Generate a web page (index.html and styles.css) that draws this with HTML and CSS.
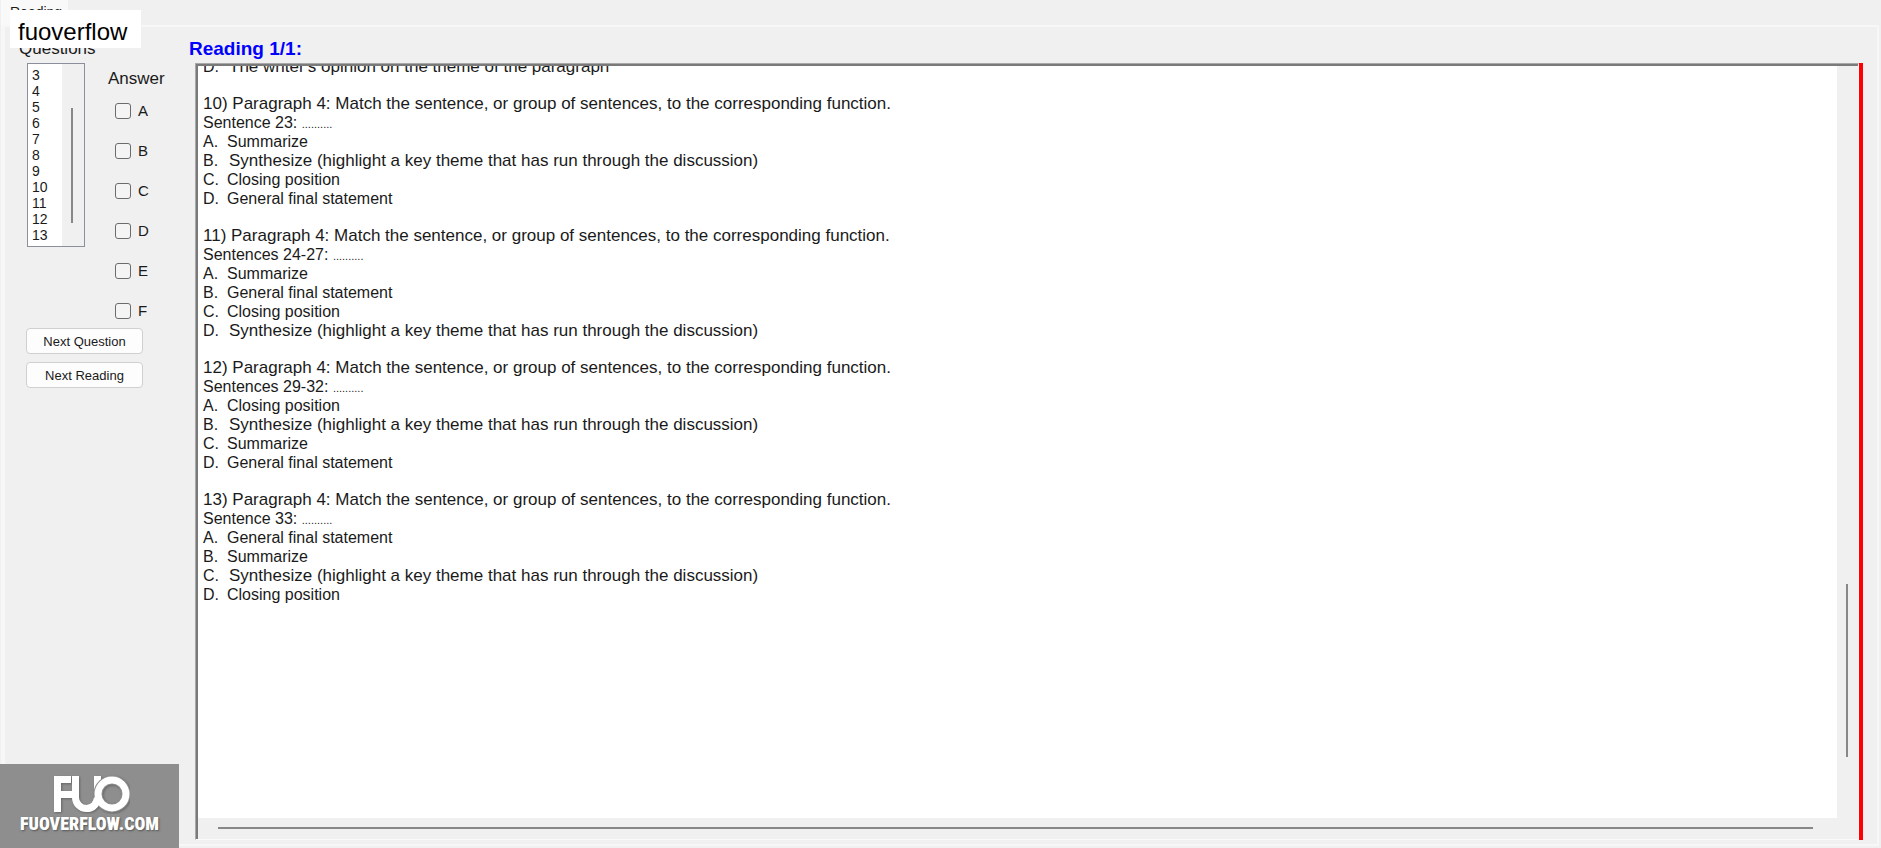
FILE: index.html
```
<!DOCTYPE html>
<html lang="en">
<head>
    <meta charset="UTF-8">
    <meta name="viewport" content="width=device-width, initial-scale=1.0">
    <title>Reading</title>
    <link rel="stylesheet" href="styles.css">
</head>
<body>
    <div class="tabs">
        <div class="tab">Reading</div>
    </div>

    <main class="panel">
        <aside class="sidebar">
            <label class="title" for="questions">Questions</label>
            <div class="columns">
                <div class="list">
                    <select id="questions" size="11">
                        <option>3</option>
                        <option>4</option>
                        <option>5</option>
                        <option>6</option>
                        <option>7</option>
                        <option>8</option>
                        <option>9</option>
                        <option>10</option>
                        <option>11</option>
                        <option>12</option>
                        <option>13</option>
                    </select>
                    <div class="list-track"><div class="list-thumb"></div></div>
                </div>
                <div class="answers">
                    <div class="title">Answer</div>
                    <label><input type="checkbox">A</label>
                    <label><input type="checkbox">B</label>
                    <label><input type="checkbox">C</label>
                    <label><input type="checkbox">D</label>
                    <label><input type="checkbox">E</label>
                    <label><input type="checkbox">F</label>
                </div>
            </div>
            <div class="buttons">
                <button type="button">Next Question</button>
                <button type="button">Next Reading</button>
            </div>
        </aside>

        <section class="reading">
            <h1>Reading 1/1:</h1>
            <div class="frame">
                <div class="viewer">
                    <div class="text">
                        <div class="question">
                            <p class="wide"><span class="letter">D.</span>The writer's opinion on the theme of the paragraph</p>
                        </div>
                        <div class="question">
                            <p class="wide">10) Paragraph 4: Match the sentence, or group of sentences, to the corresponding function.</p>
                            <p>Sentence 23: <span class="dots">..........</span></p>
                            <p><span class="letter">A.</span>Summarize</p>
                            <p class="wide"><span class="letter">B.</span>Synthesize (highlight a key theme that has run through the discussion)</p>
                            <p><span class="letter">C.</span>Closing position</p>
                            <p><span class="letter">D.</span>General final statement</p>
                        </div>
                        <div class="question">
                            <p class="wide">11) Paragraph 4: Match the sentence, or group of sentences, to the corresponding function.</p>
                            <p>Sentences 24-27: <span class="dots">..........</span></p>
                            <p><span class="letter">A.</span>Summarize</p>
                            <p><span class="letter">B.</span>General final statement</p>
                            <p><span class="letter">C.</span>Closing position</p>
                            <p class="wide"><span class="letter">D.</span>Synthesize (highlight a key theme that has run through the discussion)</p>
                        </div>
                        <div class="question">
                            <p class="wide">12) Paragraph 4: Match the sentence, or group of sentences, to the corresponding function.</p>
                            <p>Sentences 29-32: <span class="dots">..........</span></p>
                            <p><span class="letter">A.</span>Closing position</p>
                            <p class="wide"><span class="letter">B.</span>Synthesize (highlight a key theme that has run through the discussion)</p>
                            <p><span class="letter">C.</span>Summarize</p>
                            <p><span class="letter">D.</span>General final statement</p>
                        </div>
                        <div class="question">
                            <p class="wide">13) Paragraph 4: Match the sentence, or group of sentences, to the corresponding function.</p>
                            <p>Sentence 33: <span class="dots">..........</span></p>
                            <p><span class="letter">A.</span>General final statement</p>
                            <p><span class="letter">B.</span>Summarize</p>
                            <p class="wide"><span class="letter">C.</span>Synthesize (highlight a key theme that has run through the discussion)</p>
                            <p><span class="letter">D.</span>Closing position</p>
                        </div>
                    </div>
                    <div class="track-y"><div class="thumb-y"></div></div>
                    <div class="track-x"><div class="thumb-x"></div></div>
                </div>
                <div class="red-bar"></div>
            </div>
        </section>
    </main>

    <div class="name-tag">fuoverflow</div>

    <div class="watermark">
        <svg width="80" height="40" viewBox="0 0 80 40" aria-hidden="true">
            <g class="mark">
                <rect x="4" y="2" width="7" height="36"/>
                <rect x="4" y="2" width="17" height="7"/>
                <rect x="4" y="17" width="19" height="7"/>
                <path class="line" d="M25.500 2v21.500a11 11 0 0 0 22 0V2"/>
                <circle class="edge" cx="62" cy="20" r="14"/>
                <circle class="line" cx="62" cy="20" r="14"/>
                <path class="line" d="M37 34.500a10.500 11 0 0 0 10.500-11"/>
            </g>
        </svg>
        <div class="site">FUOVERFLOW.COM</div>
    </div>
</body>
</html>
```
FILE: styles.css
```
* {
    box-sizing: border-box;
}
body {
    display: flex;
    flex-direction: column;
    height: 100vh;
    margin: 0;
    padding: 0 2px 2px 1px;
    background-color: #f0f0f0;
    color: #1a1a1a;
    font-family: "Liberation Sans", Arial, sans-serif;
    font-size: 16px;
    overflow: hidden;
}
p, h1 {
    margin: 0;
}
.tabs {
    display: flex;
    height: 25px;
}
.tab {
    width: 67px;
    padding: 4px 9px;
    background-color: #f9f9f9;
    font-size: 14px;
    line-height: 16px;
}
.panel {
    display: flex;
    flex: 1;
    min-height: 0;
    border: 2px solid #f7f7f7;
    border-left-width: 4px;
}
.sidebar {
    width: 184px;
    padding: 12px 0 0 14px;
}
.title {
    display: block;
    font-size: 17px;
    line-height: 20px;
}
.columns {
    display: flex;
    gap: 23px;
    padding: 4px 0 0 8px;
}
.list {
    display: flex;
    width: 58px;
    height: 184px;
    border: 1px solid #8a8f99;
    background-color: #fff;
}
select {
    flex: 1;
    min-width: 0;
    height: 182px;
    padding: 3px 0 0;
    border: none;
    outline: none;
    background-color: #fff;
    color: #1a1a1a;
    font-family: inherit;
    font-size: 14px;
    overflow: hidden;
    scrollbar-width: none;
}
option {
    height: 16px;
    min-height: 16px;
    padding: 0 4px;
    line-height: 16px;
}
.list-track {
    width: 22px;
    padding: 44px 0 0 9px;
    background-color: #f0f0f0;
}
.list-thumb {
    width: 2px;
    height: 115px;
    background-color: #888;
}
.answers {
    display: flex;
    flex-direction: column;
    gap: 16px;
    padding-top: 6px;
}
.answers .title {
    margin-bottom: -6px;
}
.answers label {
    display: flex;
    align-items: center;
    gap: 7px;
    height: 24px;
    padding-left: 7px;
    font-size: 15px;
    line-height: 16px;
}
input[type="checkbox"] {
    appearance: none;
    width: 16px;
    height: 16px;
    margin: 0;
    border: 1px solid #6b6b6b;
    border-radius: 3px;
    background-color: #f4f4f4;
}
.buttons {
    display: flex;
    flex-direction: column;
    gap: 8px;
    width: 124px;
    padding: 5px 0 0 7px;
}
button {
    height: 26px;
    padding: 0;
    border: 1px solid #d0d0d0;
    border-radius: 4px;
    background-color: #fdfdfd;
    color: #1a1a1a;
    font-family: inherit;
    font-size: 13px;
}
.reading {
    display: flex;
    flex: 1;
    flex-direction: column;
    min-width: 0;
    padding: 12px 14px 4px 0;
}
h1 {
    color: #0000ff;
    font-size: 19px;
    line-height: 20px;
}
.frame {
    display: flex;
    flex: 1;
    min-height: 0;
    padding: 4px 0 0 6px;
}
.viewer {
    display: grid;
    flex: 1;
    grid-template-columns: 1fr 21px;
    grid-template-rows: 1fr 21px;
    min-height: 0;
    padding: 2px 0 0 2px;
    border: 1px solid #fafafa;
    border-top-color: #a8a8a8;
    border-left-color: #a8a8a8;
    box-shadow: inset 2px 2px #7a7a7a;
}
.text {
    min-height: 0;
    padding-left: 5px;
    background-color: #fff;
    line-height: 19px;
    overflow: hidden;
    white-space: nowrap;
}
.text p {
    height: 19px;
}
.question {
    margin-bottom: 18px;
}
.question:first-child {
    margin-top: -9px;
}
.letter {
    display: inline-block;
    width: 24px;
    font-size: 16px;
}
.wide {
    font-size: 17px;
}
.wide .letter {
    width: 26px;
}
.dots {
    font-size: 11px;
    line-height: 11px;
}
.track-y {
    padding: 518px 0 0 9px;
}
.thumb-y {
    width: 2px;
    height: 173px;
    background-color: #888;
}
.track-x {
    padding: 9px 24px 0 20px;
}
.thumb-x {
    height: 2px;
    background-color: #888;
}
.red-bar {
    width: 4px;
    background-color: #ff0000;
}
.name-tag {
    position: absolute;
    top: 10px;
    left: 10px;
    width: 131px;
    padding: 11px 8px 5px;
    background-color: #fff;
    color: #000;
    font-size: 24px;
    line-height: 22px;
}
.watermark {
    position: absolute;
    bottom: 0;
    left: 0;
    display: flex;
    flex-direction: column;
    align-items: center;
    width: 179px;
    height: 84px;
    padding-top: 10px;
    background-color: #8e8e8e;
    color: #fff;
}
.mark {
    fill: #fff;
    filter: drop-shadow(1px 1px 1px #666);
}
.line, .edge {
    fill: none;
    stroke: #fff;
    stroke-width: 7;
}
.edge {
    stroke: #8e8e8e;
    stroke-width: 9;
}
.site {
    font-family: "Roboto Condensed", Roboto, sans-serif;
    font-size: 18px;
    font-weight: 900;
    line-height: 20px;
    text-shadow: 1px 1px 2px #555;
}
```
